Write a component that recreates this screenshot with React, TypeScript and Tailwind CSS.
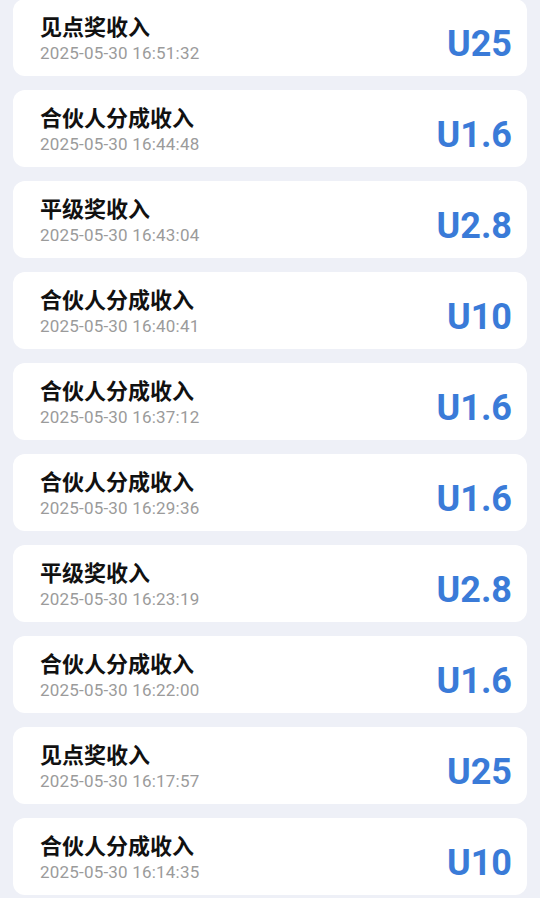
import React from "react";

const items = [
  { title: "见点奖收入", time: "2025-05-30 16:51:32", amount: "U25" },
  { title: "合伙人分成收入", time: "2025-05-30 16:44:48", amount: "U1.6" },
  { title: "平级奖收入", time: "2025-05-30 16:43:04", amount: "U2.8" },
  { title: "合伙人分成收入", time: "2025-05-30 16:40:41", amount: "U10" },
  { title: "合伙人分成收入", time: "2025-05-30 16:37:12", amount: "U1.6" },
  { title: "合伙人分成收入", time: "2025-05-30 16:29:36", amount: "U1.6" },
  { title: "平级奖收入", time: "2025-05-30 16:23:19", amount: "U2.8" },
  { title: "合伙人分成收入", time: "2025-05-30 16:22:00", amount: "U1.6" },
  { title: "见点奖收入", time: "2025-05-30 16:17:57", amount: "U25" },
  { title: "合伙人分成收入", time: "2025-05-30 16:14:35", amount: "U10" },
];

export default function App() {
  return (
    <div className="w-[540px] h-[898px] overflow-hidden bg-[#eef0f7]">
      <div className="flex flex-col gap-[14px] px-[13px] -mt-px">
        {items.map((it, i) => (
          <div
            key={i}
            className="h-[77px] shrink-0 bg-white rounded-[12px] flex items-start justify-between pl-[27px] pr-[15px]"
          >
            <div className="flex flex-col pt-[12px]">
              <div
                className="text-[22px] leading-[28px] font-bold text-[#111111]"
                style={{ fontFamily: '"Noto Sans CJK SC", "Noto Sans", sans-serif' }}
              >
                {it.title}
              </div>
              <div
                className="mt-[4px] text-[17px] leading-[20px] tracking-[0.2px] text-[#9b9b9b]"
                style={{ fontFamily: 'Roboto, "Noto Sans", sans-serif' }}
              >
                {it.time}
              </div>
            </div>
            <div
              className="self-center mt-[12px] text-[36px] leading-[40px] font-bold text-[#3a7bd8]"
              style={{ fontFamily: 'Roboto, "Noto Sans", sans-serif' }}
            >
              {it.amount}
            </div>
          </div>
        ))}
      </div>
    </div>
  );
}
